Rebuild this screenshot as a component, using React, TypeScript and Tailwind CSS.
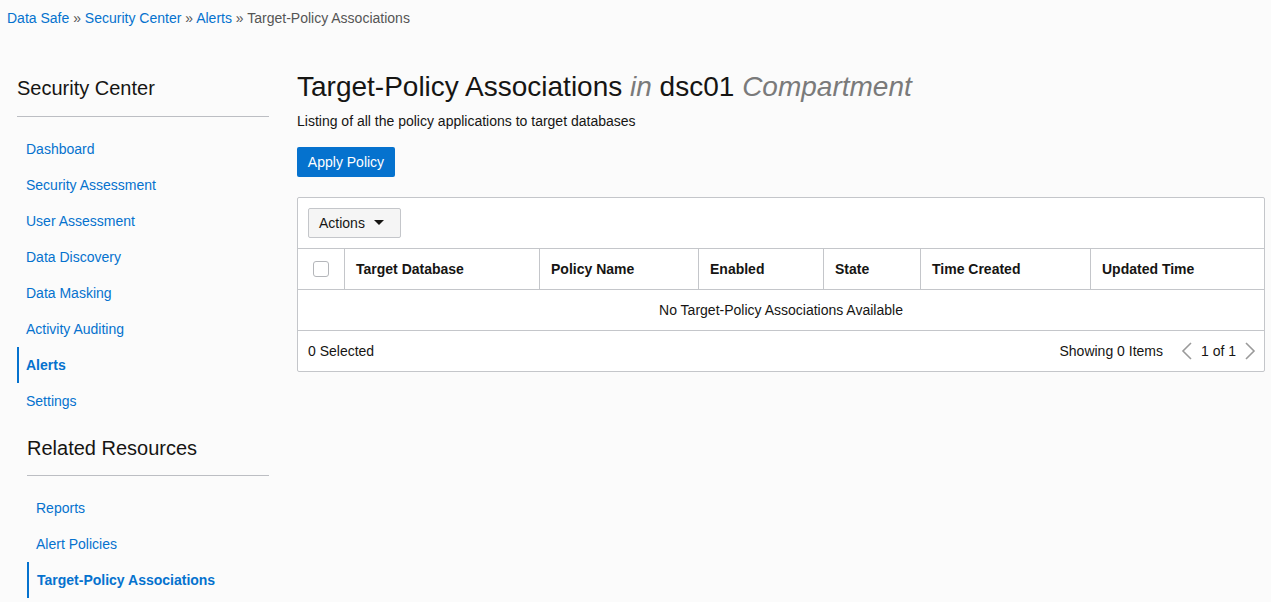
const navItems = [
  'Dashboard',
  'Security Assessment',
  'User Assessment',
  'Data Discovery',
  'Data Masking',
  'Activity Auditing',
  'Alerts',
  'Settings',
];

const relatedItems = ['Reports', 'Alert Policies', 'Target-Policy Associations'];

const columns = [
  { label: 'Target Database', w: 'w-[195px]' },
  { label: 'Policy Name', w: 'w-[159px]' },
  { label: 'Enabled', w: 'w-[125px]' },
  { label: 'State', w: 'w-[97px]' },
  { label: 'Time Created', w: 'w-[170px]' },
  { label: 'Updated Time', w: 'flex-1' },
];

const Chevron = ({ dir }: { dir: 'left' | 'right' }) => (
  <svg width="12" height="18" viewBox="0 0 12 18" fill="none" stroke="#9a9a9a" strokeWidth="1.6">
    {dir === 'left' ? <path d="M10 1 L2 9 L10 17" /> : <path d="M2 1 L10 9 L2 17" />}
  </svg>
);

export default function App() {
  return (
    <div className="min-h-screen bg-[#fbfbfb] font-['Liberation_Sans',Arial,sans-serif] text-[14px] text-[#161513]">
      {/* Breadcrumb */}
      <div className="px-[7px] pt-2 leading-[20px] text-[#555]">
        <a className="text-[#0572ce]">Data Safe</a> » <a className="text-[#0572ce]">Security Center</a> »{' '}
        <a className="text-[#0572ce]">Alerts</a> » Target-Policy Associations
      </div>

      <div className="flex pt-[43px]">
        {/* Sidebar */}
        <aside className="ml-[17px] w-[252px] pt-[5px]">
          <h2 className="text-[20px] leading-[24px] text-[#161513]">Security Center</h2>
          <div className="mt-4 border-t border-[#bcbec3]" />
          <ul className="mt-[14px]">
            {navItems.map((item) =>
              item === 'Alerts' ? (
                <li key={item} className="flex h-9 items-center border-l-2 border-[#0572ce] pl-[7px] font-bold text-[#0572ce]">
                  {item}
                </li>
              ) : (
                <li key={item} className="flex h-9 items-center pl-[9px] text-[#0572ce]">
                  {item}
                </li>
              )
            )}
          </ul>
          <div className="ml-[10px]">
            <h2 className="mt-[17px] text-[20px] leading-[24px] text-[#161513]">Related Resources</h2>
            <div className="mt-[15px] border-t border-[#bcbec3]" />
            <ul className="mt-[14px]">
              {relatedItems.map((item) =>
                item === 'Target-Policy Associations' ? (
                  <li key={item} className="flex h-9 items-center border-l-2 border-[#0572ce] pl-[8px] font-bold text-[#0572ce]">
                    {item}
                  </li>
                ) : (
                  <li key={item} className="flex h-9 items-center pl-[9px] text-[#0572ce]">
                    {item}
                  </li>
                )
              )}
            </ul>
          </div>
        </aside>

        {/* Main */}
        <main className="ml-[28px] mr-[6px] flex-1">
          <h1 className="text-[28px] leading-[32px] text-[#161513]">
            Target-Policy Associations <i className="text-[#7a7a7a]">in</i> dsc01{' '}
            <i className="text-[#7a7a7a]">Compartment</i>
          </h1>
          <p className="mt-2 leading-[20px] text-[#161513]">Listing of all the policy applications to target databases</p>
          <button className="mt-4 h-[30px] w-[98px] rounded-[2px] bg-[#0572ce] text-white">Apply Policy</button>

          <div className="mt-5 rounded-[2px] border border-[#c4c6ca] bg-white">
            <div className="p-[10px]">
              <button className="flex h-[30px] w-[93px] items-center rounded-[2px] border border-[#c4c6ca] bg-[#f5f5f5] pl-[10px] text-[#161513]">
                Actions
                <svg className="ml-[9px]" width="10" height="6" viewBox="0 0 10 6">
                  <path d="M0 0 L10 0 L5 5 Z" fill="#161513" />
                </svg>
              </button>
            </div>
            <div className="flex h-[42px] border-y border-[#c4c6ca] font-bold">
              <div className="flex w-[47px] items-center justify-center border-r border-[#c4c6ca]">
                <div className="h-4 w-4 rounded-[3px] border border-[#b4b6ba] bg-white" />
              </div>
              {columns.map((c, i) => (
                <div
                  key={c.label}
                  className={`${c.w} flex items-center px-[11px] ${i < columns.length - 1 ? 'border-r border-[#c4c6ca]' : ''}`}
                >
                  {c.label}
                </div>
              ))}
            </div>
            <div className="flex h-[41px] items-center justify-center border-b border-[#c4c6ca]">
              No Target-Policy Associations Available
            </div>
            <div className="flex h-[40px] items-center justify-between pl-[10px] pr-[8px]">
              <span>0 Selected</span>
              <div className="flex items-center">
                <span>Showing 0 Items</span>
                <span className="ml-[18px]">
                  <Chevron dir="left" />
                </span>
                <span className="ml-2">1 of 1</span>
                <span className="ml-2">
                  <Chevron dir="right" />
                </span>
              </div>
            </div>
          </div>
        </main>
      </div>
    </div>
  );
}
